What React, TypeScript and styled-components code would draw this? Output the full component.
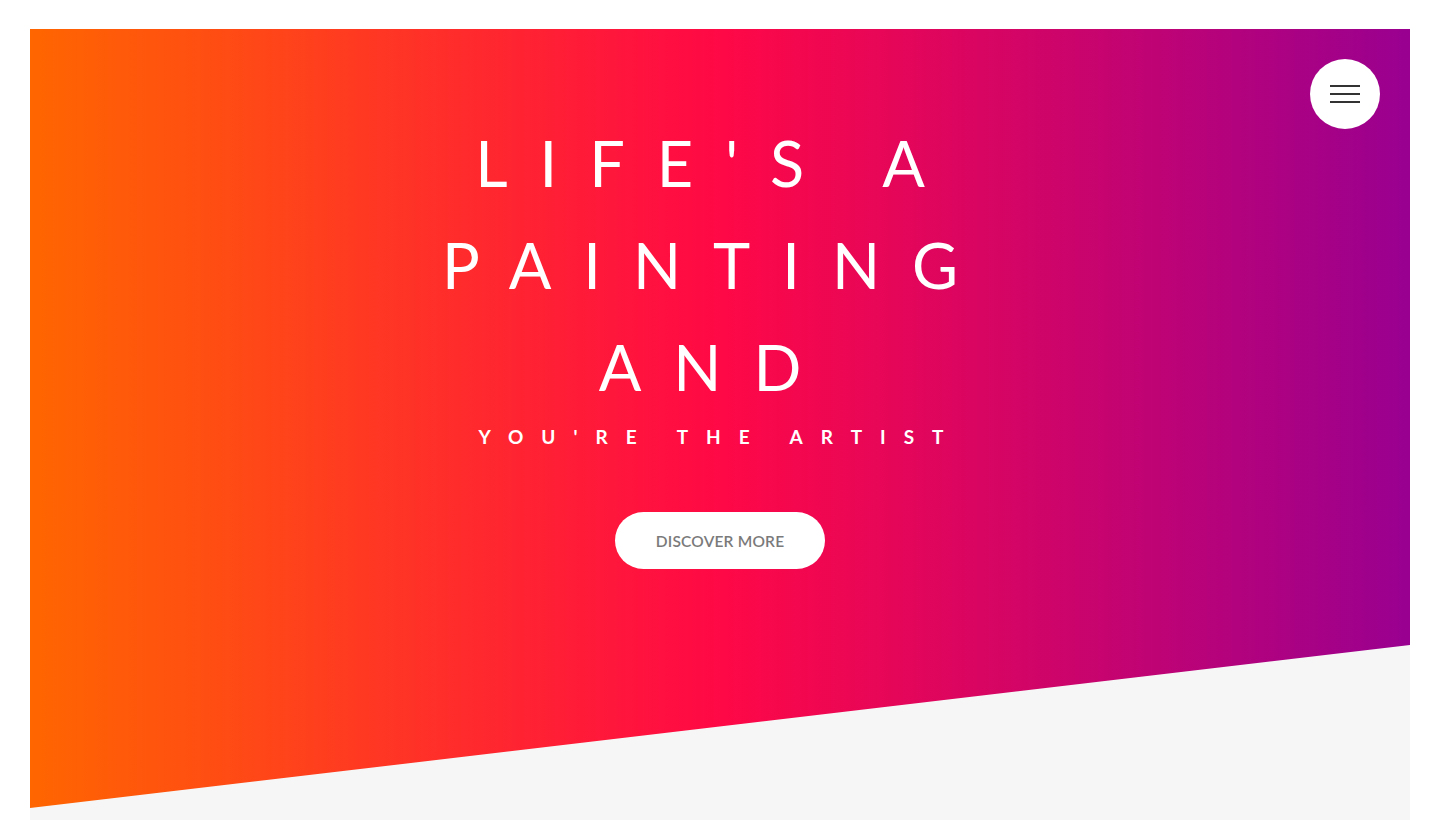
import React from "react";
import styled, { createGlobalStyle } from "styled-components";

const GlobalStyle = createGlobalStyle`
  html, body {
    margin: 0;
    padding: 0;
    background: #ffffff;
    font-family: Lato, "Open Sans", Arial, sans-serif;
  }
  * { box-sizing: border-box; }
`;

const Page = styled.div`
  padding: 29px 30px 0 30px;
  height: 820px;
  overflow: hidden;
`;

const Stage = styled.section`
  position: relative;
  height: 820px;
  background: #f6f6f6;
`;

const Hero = styled.div`
  height: 100%;
  background: linear-gradient(to right, #ff6600 0%, #ff0846 50%, #990090 100%);
  clip-path: polygon(0 0, 100% 0, 100% 616px, 0 779px);
  display: flex;
  flex-direction: column;
  align-items: center;
  padding-top: 83px;
`;

const Title = styled.h1`
  margin: 0;
  max-width: 620px;
  text-align: center;
  color: #ffffff;
  font-family: Lato, sans-serif;
  font-weight: 400;
  font-size: 63px;
  line-height: 102px;
  letter-spacing: 32px;
  padding-right: 8px;
`;

const Subtitle = styled.h2`
  margin: 0;
  margin-top: 4px;
  color: #ffffff;
  font-family: Lato, sans-serif;
  font-weight: 700;
  font-size: 19px;
  line-height: 30px;
  letter-spacing: 18px;
  text-align: center;
`;

const Discover = styled.button`
  margin-top: 60px;
  width: 210px;
  height: 57px;
  border: none;
  border-radius: 29px;
  background: #ffffff;
  color: #7a7a7a;
  font-family: Lato, sans-serif;
  font-weight: 600;
  font-size: 15.5px;
  letter-spacing: 0.2px;
  text-transform: uppercase;
  cursor: pointer;
`;

const MenuButton = styled.button`
  position: absolute;
  top: 30px;
  right: 30px;
  width: 70px;
  height: 70px;
  border-radius: 50%;
  border: none;
  background: #ffffff;
  display: flex;
  flex-direction: column;
  align-items: center;
  justify-content: center;
  gap: 6px;
  padding: 0;
  cursor: pointer;
`;

const Bar = styled.span`
  display: block;
  width: 30px;
  height: 2px;
  background: #333333;
`;

export default function App() {
  return (
    <>
      <GlobalStyle />
      <Page>
        <Stage>
          <Hero>
            <Title>LIFE'S A PAINTING AND</Title>
            <Subtitle>YOU'RE THE ARTIST</Subtitle>
            <Discover>Discover More</Discover>
          </Hero>
          <MenuButton aria-label="menu">
            <Bar />
            <Bar />
            <Bar />
          </MenuButton>
        </Stage>
      </Page>
    </>
  );
}
